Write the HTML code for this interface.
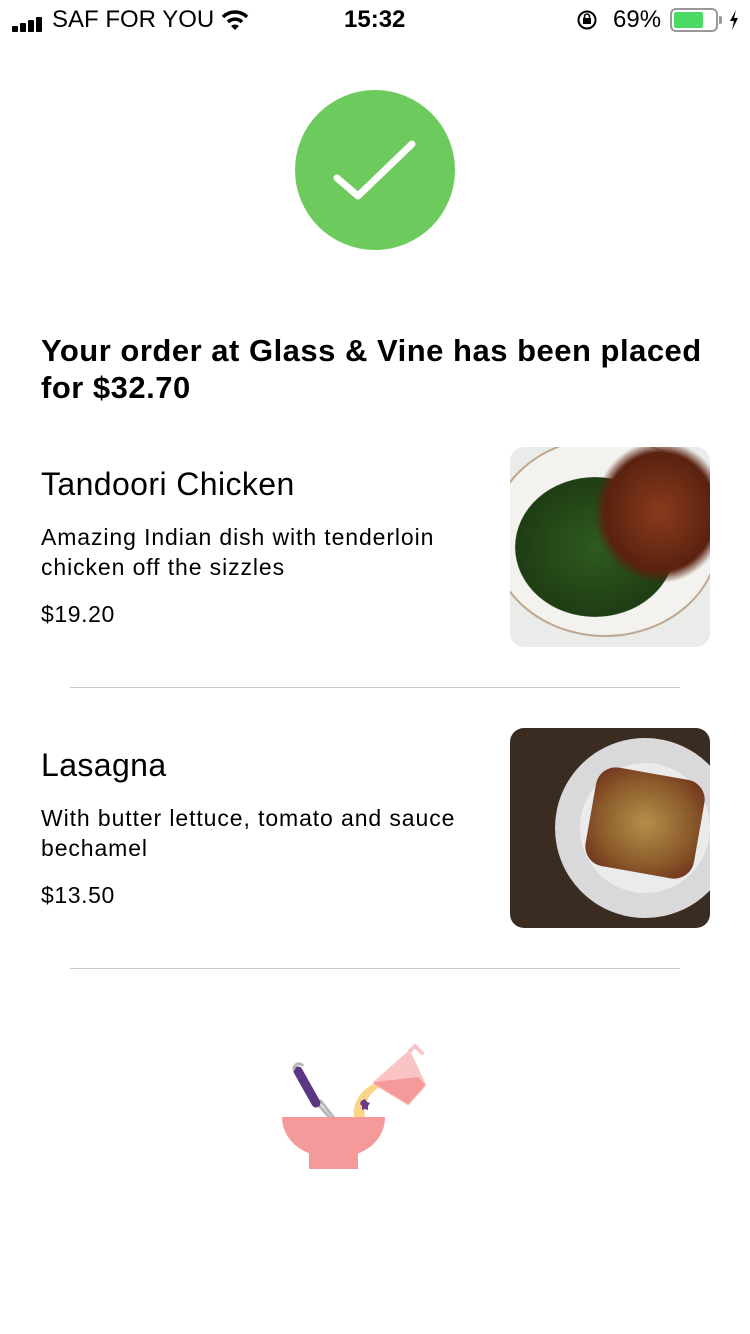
<!DOCTYPE html>
<html><head><meta charset="utf-8"><style>
*{margin:0;padding:0;box-sizing:border-box}
body{width:750px;height:1334px;background:#fff;font-family:"Liberation Sans",Arial,sans-serif;color:#000;position:relative;overflow:hidden}
.abs{position:absolute}
.sb{font-size:24px;top:6px}
h1{position:absolute;left:41px;top:332px;width:690px;font-size:31px;font-weight:bold;line-height:37px;letter-spacing:0.5px}
.t{position:absolute;left:41px;font-size:32px;letter-spacing:0.4px}
.d{position:absolute;left:41px;font-size:23px;line-height:30px;width:440px;letter-spacing:0.9px}
.p{position:absolute;left:41px;font-size:23px;letter-spacing:0.6px}
.hr{position:absolute;left:70px;width:610px;height:1px;background:#c8c8c8}
.img{position:absolute;left:510px;width:200px;height:200px;border-radius:14px;overflow:hidden}
</style></head><body>
<div class="abs" style="left:12px;top:18px;width:38px;height:14px">
 <div class="abs" style="left:0;top:8px;width:6px;height:6px;background:#000;border-radius:1px"></div>
 <div class="abs" style="left:8px;top:5px;width:6px;height:9px;background:#000;border-radius:1px"></div>
 <div class="abs" style="left:16px;top:2px;width:6px;height:12px;background:#000;border-radius:1px"></div>
 <div class="abs" style="left:24px;top:-1px;width:6px;height:15px;background:#000;border-radius:1px"></div>
</div>
<div class="abs sb" style="left:52px">SAF FOR YOU</div>
<svg class="abs" style="left:221px;top:9px" width="28" height="22" viewBox="0 0 28 22"><path d="M2 8 A17 17 0 0 1 26 8" stroke="#000" stroke-width="3.5" fill="none"/><path d="M7 13 A10 10 0 0 1 21 13" stroke="#000" stroke-width="3.5" fill="none"/><path d="M10 17 L14 21 L18 17 A6 6 0 0 0 10 17Z" fill="#000"/></svg>
<div class="abs sb" style="left:344px;font-weight:bold">15:32</div>
<svg class="abs" style="left:576px;top:9px" width="22" height="22" viewBox="0 0 22 22"><circle cx="11" cy="11" r="8.5" stroke="#000" stroke-width="2" fill="none"/><rect x="7" y="9" width="8" height="6" fill="#000"/><path d="M8.5 9 V7.5 a2.5 2.5 0 0 1 5 0 V9" stroke="#000" stroke-width="1.6" fill="none"/></svg>
<div class="abs sb" style="left:613px">69%</div>
<div class="abs" style="left:670px;top:8px;width:48px;height:24px;border:2px solid #999;border-radius:6px"><div style="margin:2px;width:29px;height:16px;background:#4cd964;border-radius:2px"></div></div>
<div class="abs" style="left:719px;top:16px;width:3px;height:8px;background:#999;border-radius:0 2px 2px 0"></div>
<svg class="abs" style="left:728px;top:10px" width="12" height="20" viewBox="0 0 12 20"><path d="M8 0 L2 11 H6 L4 20 L10 8 H6Z" fill="#000"/></svg>

<div class="abs" style="left:295px;top:90px;width:160px;height:160px;border-radius:50%;background:#6dcb5d"></div>
<svg class="abs" style="left:295px;top:90px" width="160" height="160"><path d="M42 88 L63 106 L117 54" stroke="#fff" stroke-width="7" fill="none" stroke-linecap="round" stroke-linejoin="round"/></svg>

<h1>Your order at Glass &amp; Vine has been placed for $32.70</h1>

<div class="t" style="top:466px">Tandoori Chicken</div>
<div class="d" style="top:522px">Amazing Indian dish with tenderloin chicken off the sizzles</div>
<div class="p" style="top:601px">$19.20</div>
<div class="img" style="top:447px;background:#e9ece9">
 <div class="abs" style="left:-20px;top:-10px;width:230px;height:200px;border-radius:50%;background:#f3f2ee;border:2px solid #bfa78e"></div>
 <div class="abs" style="left:5px;top:30px;width:160px;height:140px;border-radius:50%;background:radial-gradient(#2f5a1e,#1f3d14 70%,transparent 72%)"></div>
 <div class="abs" style="left:85px;top:-5px;width:130px;height:140px;border-radius:45%;background:radial-gradient(#8a3a1c,#5a2210 60%,transparent 72%)"></div>
</div>
<div class="hr" style="top:687px"></div>

<div class="t" style="top:747px">Lasagna</div>
<div class="d" style="top:803px">With butter lettuce, tomato and sauce bechamel</div>
<div class="p" style="top:882px">$13.50</div>
<div class="img" style="top:728px;background:#3b2c22">
 <div class="abs" style="left:45px;top:10px;width:180px;height:180px;border-radius:50%;background:#d9d9db"></div>
 <div class="abs" style="left:70px;top:35px;width:130px;height:130px;border-radius:50%;background:#ebebec"></div>
 <div class="abs" style="left:80px;top:45px;width:110px;height:100px;border-radius:20px;background:radial-gradient(#b58f4a,#8a5a2a 60%,#6a2a1a);transform:rotate(10deg)"></div>
</div>
<div class="hr" style="top:968px"></div>

<svg class="abs" style="left:270px;top:1040px" width="170" height="140" viewBox="0 0 170 140">
 <line x1="46" y1="62" x2="60" y2="78" stroke="#b8b8b8" stroke-width="3"/>
 <line x1="50" y1="60" x2="64" y2="78" stroke="#b8b8b8" stroke-width="3"/>
 <line x1="28" y1="31" x2="46" y2="63" stroke="#5b3683" stroke-width="9" stroke-linecap="round"/>
 <path d="M24 30 a5 5 0 0 1 9 -4" stroke="#b8b8b8" stroke-width="3" fill="none"/>
 <path d="M106 43 C92 48 82 62 84 78 L95 78 C93 64 98 54 110 47Z" fill="#fcd589"/>
 <path d="M91 61 l4 -2 2 3 3 1 -2 3 0 4 -3 -1 -3 1 0 -4 -2 -2Z" fill="#6b3a8a"/>
 <path d="M105 43 L139 13 L154 45 L138 63Z" fill="#fbc4c4" stroke="#fbc4c4" stroke-width="4" stroke-linejoin="round"/>
 <path d="M105 43 L148 38 L154 45 L138 63Z" fill="#f59a9a" stroke="#f59a9a" stroke-width="2" stroke-linejoin="round"/>
 <path d="M140 11 L145 6 L152 13" stroke="#fbc4c4" stroke-width="4" fill="none" stroke-linecap="round" stroke-linejoin="round"/>
 <path d="M12 77 H115 C115 102 92 118 64 118 C36 118 12 102 12 77Z" fill="#f59a9a"/>
 <rect x="39" y="112" width="49" height="17" fill="#f59a9a"/>
</svg>
</body></html>
